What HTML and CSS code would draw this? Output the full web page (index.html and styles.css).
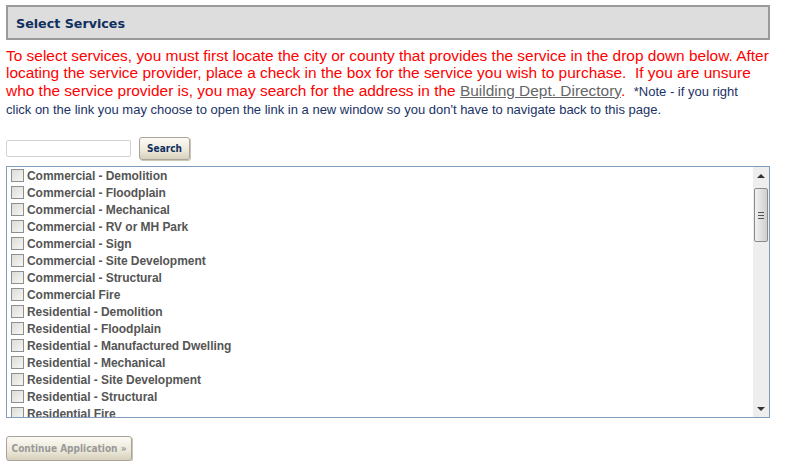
FILE: index.html
```html
<!DOCTYPE html>
<html lang="en">
<head>
    <meta charset="UTF-8">
    <title>Select Services</title>
    <link rel="stylesheet" href="styles.css">
</head>
<body>
    <div class="page">
        <div class="section-title">Select Services</div>

        <p class="intro">
            To select services, you must first locate the city or county that provides the service in the drop down below. After locating the service provider, place a check in the box for the service you wish to purchase.&nbsp; If you are unsure who the service provider is, you may search for the address in the <a href="#" class="dir-link">Building Dept. Directory</a>.&nbsp; <span class="note">*Note - if you right<br>click on the link you may choose to open the link in a new window so you don't have to navigate back to this page.</span>
        </p>

        <div class="search-row">
            <input type="text" class="search-input">
            <button class="btn btn-search">Search</button>
        </div>

        <div class="service-box">
            <ul class="service-list">
                <li><input type="checkbox"><label>Commercial - Demolition</label></li>
                <li><input type="checkbox"><label>Commercial - Floodplain</label></li>
                <li><input type="checkbox"><label>Commercial - Mechanical</label></li>
                <li><input type="checkbox"><label>Commercial - RV or MH Park</label></li>
                <li><input type="checkbox"><label>Commercial - Sign</label></li>
                <li><input type="checkbox"><label>Commercial - Site Development</label></li>
                <li><input type="checkbox"><label>Commercial - Structural</label></li>
                <li><input type="checkbox"><label>Commercial Fire</label></li>
                <li><input type="checkbox"><label>Residential - Demolition</label></li>
                <li><input type="checkbox"><label>Residential - Floodplain</label></li>
                <li><input type="checkbox"><label>Residential - Manufactured Dwelling</label></li>
                <li><input type="checkbox"><label>Residential - Mechanical</label></li>
                <li><input type="checkbox"><label>Residential - Site Development</label></li>
                <li><input type="checkbox"><label>Residential - Structural</label></li>
                <li><input type="checkbox"><label>Residential Fire</label></li>
                <li><input type="checkbox"><label>Residential - Sign</label></li>
            </ul>
            <div class="scrollbar">
                <div class="arrow arrow-up"></div>
                <div class="thumb">
                    <span class="grip"></span>
                </div>
                <div class="track"></div>
                <div class="arrow arrow-down"></div>
            </div>
        </div>

        <button class="btn btn-continue" disabled>Continue Application &raquo;</button>
    </div>
</body>
</html>
```

FILE: styles.css
```css
body {
    margin: 0;
    background-color: white;
    font-family: "Liberation Sans", Arial, sans-serif;
}

.page {
    padding: 5px 20px 0 6px;
}

.section-title {
    background-color: #dddddd;
    border: 2px solid #9a9a9a;
    color: #0f2f5f;
    font-family: "DejaVu Sans", Tahoma, sans-serif;
    font-weight: bold;
    font-size: 12.7px;
    padding: 9px 8px 7px 8px;
    line-height: 15px;
}

.intro {
    margin: 7px 0 0 0;
    color: #ff0000;
    font-size: 15.45px;
    line-height: 17.3px;
}

.dir-link {
    color: #666666;
}

.note {
    color: #1a3366;
    font-size: 13px;
}

.search-row {
    display: flex;
    align-items: center;
    gap: 8px;
    margin-top: 19px;
}

.search-input {
    width: 125px;
    height: 17px;
    box-sizing: border-box;
    border: 1px solid #d3d3d3;
    border-radius: 2px;
    margin: 0;
    padding: 0 3px;
}

.btn {
    font-family: "DejaVu Sans Condensed", Tahoma, sans-serif;
    font-weight: bold;
    font-size: 10px;
    white-space: nowrap;
    border: 1px solid #a8a499;
    border-radius: 3px;
    background: linear-gradient(#fbfaf4, #ece8d8 60%, #d6d0bc);
    box-shadow: 1px 1px 0 #c8c4b8;
    cursor: pointer;
}

.btn-search {
    color: #0f2f5f;
    width: 51px;
    height: 23px;
    padding: 0;
}

.service-box {
    display: flex;
    margin-top: 6px;
    height: 252px;
    box-sizing: border-box;
    border: 1px solid #7f9db9;
    overflow: hidden;
}

.service-list {
    flex-grow: 1;
    list-style-type: none;
    margin: 0;
    padding: 0 0 0 3px;
    overflow: hidden;
}

.service-list li {
    display: flex;
    align-items: center;
    height: 17px;
}

.service-list input[type="checkbox"] {
    appearance: none;
    width: 13px;
    height: 13px;
    margin: 0 3px 0 1px;
    border: 1px solid #8e8f8f;
    background: linear-gradient(135deg, #dcdcd8, #f6f6f4);
    box-sizing: border-box;
}

.service-list label {
    color: #555555;
    font-weight: bold;
    font-size: 12px;
    letter-spacing: -0.05px;
}

.scrollbar {
    width: 16px;
    display: flex;
    flex-direction: column;
    background-color: #eeeeee;
}

.arrow {
    height: 17px;
    display: flex;
    align-items: center;
    justify-content: center;
}

.arrow-up::before {
    content: "";
    border-left: 4px solid transparent;
    border-right: 4px solid transparent;
    border-bottom: 4px solid #333333;
}

.arrow-down::before {
    content: "";
    border-left: 4px solid transparent;
    border-right: 4px solid transparent;
    border-top: 4px solid #333333;
}

.thumb {
    height: 52px;
    margin: 4px 1px 0 1px;
    border: 1px solid #8b8b8b;
    border-radius: 2px;
    background: linear-gradient(90deg, #f2f2f2, #dcdcdc 60%, #cfcfcf);
    display: flex;
    align-items: center;
    justify-content: center;
}

.grip {
    width: 6px;
    height: 7px;
    background: repeating-linear-gradient(#555 0 1px, transparent 1px 3px);
}

.track {
    flex-grow: 1;
}

.btn-continue {
    display: block;
    margin-top: 18px;
    width: 126px;
    height: 25px;
    color: #999999;
    padding: 0;
    cursor: default;
}
```
